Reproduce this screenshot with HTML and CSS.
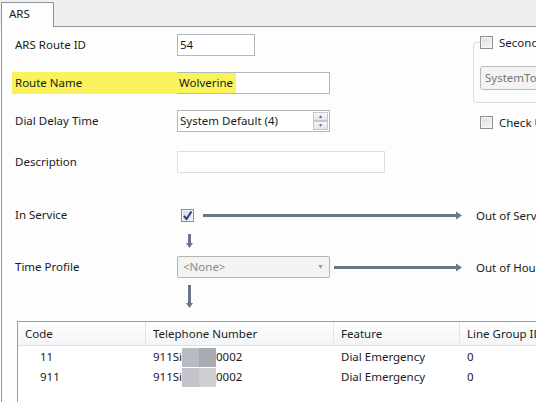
FILE: index.html
```html
<!DOCTYPE html>
<html lang="en">
<head>
    <meta charset="UTF-8">
    <title>ARS</title>
    <link rel="stylesheet" href="styles.css">
</head>
<body>

    <div class="tabs">
        <div class="tab">ARS</div>
    </div>

    <div class="panel">
        <div class="top">
            <div class="fields">
                <div class="row">
                    <label class="label">ARS Route ID</label>
                    <div class="input w-id">54</div>
                </div>
                <div class="row">
                    <label class="label hl">Route Name</label>
                    <div class="input w-name"><span class="hl-text">Wolverine</span></div>
                </div>
                <div class="row">
                    <label class="label">Dial Delay Time</label>
                    <div class="input w-name spin-box">
                        <span>System Default (4)</span>
                        <div class="spin">
                            <div class="spin-btn">&#9650;</div>
                            <div class="spin-btn">&#9660;</div>
                        </div>
                    </div>
                </div>
            </div>

            <div class="side">
                <div class="group">
                    <div class="legend"><span class="cb"></span>Secondary Dial Tone</div>
                    <div class="select side-select">SystemTone</div>
                </div>
                <div class="check-row"><span class="cb"></span>Check User Call Barring</div>
            </div>
        </div>

        <div class="row desc-row">
            <label class="label">Description</label>
            <div class="input w-desc"></div>
        </div>

        <div class="row service-row">
            <label class="label">In Service</label>
            <span class="cb checked">
                <svg width="11" height="11" viewBox="0 0 11 11"><path d="M2 6 L4.5 9 L9.5 1.5" fill="none" stroke="#2c3f94" stroke-width="2"/></svg>
            </span>
            <svg class="arrow-h long" width="259" height="9" viewBox="0 0 259 9"><rect x="0" y="3" width="254" height="3" fill="#6b768a"/><path d="M253 0.5 L259 4.5 L253 8.5 Z" fill="#6b768a"/></svg>
            <span class="outcome">Out of Service Route</span>
        </div>

        <svg class="arrow-v first" width="7" height="14" viewBox="0 0 7 14"><rect x="2" y="0" width="3" height="10" fill="#6b768a"/><path d="M0 9 L7 9 L3.5 14 Z" fill="#6b768a"/></svg>

        <div class="row time-row">
            <label class="label">Time Profile</label>
            <div class="select w-name">
                <span>&lt;None&gt;</span>
                <span class="drop">&#9660;</span>
            </div>
            <svg class="arrow-h short" width="128" height="9" viewBox="0 0 128 9"><rect x="0" y="3" width="123" height="3" fill="#6b768a"/><path d="M122 0.5 L128 4.5 L122 8.5 Z" fill="#6b768a"/></svg>
            <span class="outcome">Out of Hours Route</span>
        </div>

        <svg class="arrow-v second" width="7" height="23" viewBox="0 0 7 23"><rect x="2" y="0" width="3" height="19" fill="#6b768a"/><path d="M0 18 L7 18 L3.5 23 Z" fill="#6b768a"/></svg>

        <div class="table">
            <div class="thead">
                <div class="th c-code">Code</div>
                <div class="th c-tel">Telephone Number</div>
                <div class="th c-feat">Feature</div>
                <div class="th c-grp">Line Group ID</div>
            </div>
            <div class="tr">
                <div class="td c-code">11</div>
                <div class="td c-tel">911Si<span class="blur b1"></span><span class="blur b2"></span>0002</div>
                <div class="td c-feat">Dial Emergency</div>
                <div class="td c-grp">0</div>
            </div>
            <div class="tr">
                <div class="td c-code">911</div>
                <div class="td c-tel">911Si<span class="blur b3"></span><span class="blur b4"></span>0002</div>
                <div class="td c-feat">Dial Emergency</div>
                <div class="td c-grp">0</div>
            </div>
        </div>
    </div>

</body>
</html>
```

FILE: styles.css
```css
/* Reset CSS */
* {
    margin: 0;
    padding: 0;
    box-sizing: border-box;
}

body {
    font-family: "Noto Sans", Arial, sans-serif;
    font-size: 11.5px;
    color: #1b1b1b;
    background-color: #fdfdfd;
    width: 536px;
    height: 402px;
    overflow: hidden;
}

.tabs {
    background-color: #efefef;
    height: 26px;
    padding-top: 2px;
    padding-left: 1px;
}

.tab {
    width: 53px;
    height: 25px;
    background-color: #fdfdfd;
    border: 1px solid #8e9299;
    border-bottom: none;
    padding-left: 7px;
    line-height: 22px;
    position: relative;
    z-index: 1;
}

.panel {
    border-top: 1px solid #8e9299;
    border-left: 1px solid #8e9299;
    margin-left: 1px;
    padding-left: 13px;
    height: 376px;
    width: 700px;
}

.top {
    display: flex;
}

.fields {
    width: 458px;
    padding-top: 7px;
}

.row {
    display: flex;
    align-items: center;
    height: 22px;
    margin-bottom: 16px;
}

.label {
    width: 162px;
    height: 22px;
    line-height: 22px;
    flex-shrink: 0;
}

.label.hl {
    background-color: #f8f25c;
    margin-left: -3px;
    padding-left: 3px;
    width: 165px;
}

.hl-text {
    background-color: #f8f25c;
    display: inline-block;
    height: 20px;
    line-height: 20px;
    padding: 0 3px 0 2px;
    margin-left: -3px;
}

.input {
    height: 22px;
    border: 1px solid #b4b7bd;
    background-color: #fff;
    padding-left: 2px;
    line-height: 20px;
}

.w-id {
    width: 78px;
}

.w-name {
    width: 153px;
}

.w-desc {
    width: 208px;
    border-color: #dedede;
}

.spin-box {
    display: flex;
    justify-content: space-between;
}

.spin {
    display: flex;
    flex-direction: column;
    margin: 1px 1px 0 0;
}

.spin-btn {
    width: 15px;
    height: 9px;
    border: 1px solid #c4c7cc;
    background: linear-gradient(#f7f7f7, #e3e5e8);
    color: #5a6b85;
    font-size: 5px;
    line-height: 7px;
    text-align: center;
}

.select {
    height: 22px;
    border: 1px solid #b3b3b3;
    border-radius: 2px;
    background-color: #f3f3f3;
    color: #8a8a8a;
    padding-left: 5px;
    line-height: 20px;
    display: flex;
    justify-content: space-between;
}

.drop {
    font-size: 7px;
    color: #9a9a9a;
    padding-right: 5px;
}

/* right hand column */
.side {
    padding-top: 8px;
}

.group {
    margin-top: 7px;
    width: 120px;
    height: 61px;
    border: 1px solid #d6dde3;
    border-radius: 4px;
    padding-left: 6px;
}

.legend {
    display: flex;
    align-items: center;
    background-color: #fdfdfd;
    margin-top: -8px;
    height: 15px;
    white-space: nowrap;
}

.side-select {
    margin-top: 16px;
    height: 24px;
    border-radius: 3px;
    color: #777;
    padding-left: 4px;
    line-height: 22px;
    border-color: #bcbcbc;
}

.check-row {
    display: flex;
    align-items: center;
    margin-top: 12px;
    margin-left: 7px;
    white-space: nowrap;
}

.cb {
    display: inline-flex;
    align-items: center;
    justify-content: center;
    width: 13px;
    height: 13px;
    border: 1px solid #8f8f8f;
    background: linear-gradient(135deg, #dcdcdc, #f6f6f6);
    box-shadow: inset 0 0 0 1px #f4f4f4;
    margin-right: 6px;
    flex-shrink: 0;
}

.cb.checked {
    margin-left: 4px;
    margin-right: 0;
    background: linear-gradient(135deg, #d5d8de, #f3f4f6);
}

/* lower part */
.desc-row {
    margin-top: 3px;
    margin-bottom: 0;
}

.service-row {
    margin-top: 31px;
    margin-bottom: 0;
}

.arrow-h.long {
    margin-left: 9px;
}

.arrow-h.short {
    margin-left: 4px;
}

.outcome {
    margin-left: 14px;
    white-space: nowrap;
}

.arrow-v {
    display: block;
    margin-left: 171px;
}

.arrow-v.first {
    margin-top: 8px;
}

.arrow-v.second {
    margin-top: 7px;
}

.time-row {
    margin-top: 8px;
    margin-bottom: 0;
}

.table {
    margin-top: 13px;
    margin-left: 2px;
    border-top: 1px solid #9a9da3;
    border-left: 1px solid #9a9da3;
    background-color: #fff;
    height: 90px;
}

.thead {
    display: flex;
    height: 24px;
    background: linear-gradient(#ffffff, #f3f4f6);
    border-bottom: 1px solid #e3e4e6;
}

.th {
    border-right: 1px solid #e3e4e6;
    padding-left: 7px;
    line-height: 23px;
}

.tr {
    display: flex;
    height: 20px;
    line-height: 20px;
}

.thead + .tr {
    margin-top: 1px;
}

.td {
    padding-left: 7px;
    white-space: nowrap;
}

.c-code {
    width: 128px;
}

.td.c-code {
    padding-left: 22px;
}

.c-tel {
    width: 188px;
    display: flex;
    align-items: center;
}

.c-feat {
    width: 126px;
}

.c-grp {
    width: 120px;
}

.blur {
    display: inline-block;
    width: 17px;
    height: 19px;
}

.b1 { background-color: #b8bbc1; }
.b2 { background-color: #a8abb1; }
.b3 { background-color: #c3c3cb; }
.b4 { background-color: #cfced3; }
```
